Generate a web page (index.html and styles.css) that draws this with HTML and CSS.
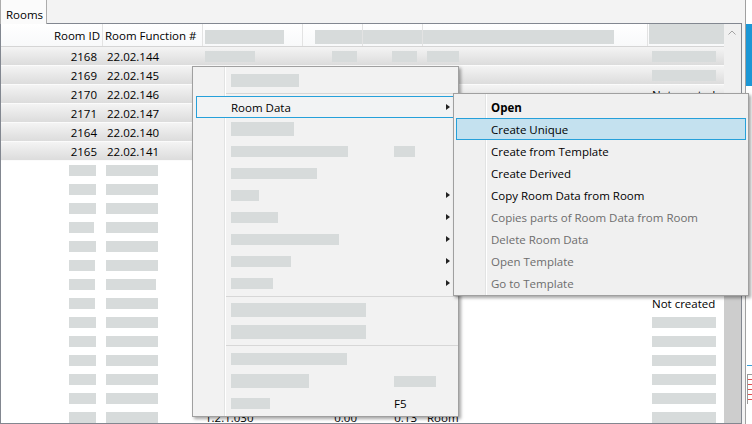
FILE: index.html
```html
<!DOCTYPE html>
<html>
<head>
<meta charset="utf-8">
<link rel="stylesheet" href="styles.css">
</head>
<body>
<div class="app">
  <div class="main">
    <div class="tabs"><div class="tab">Rooms</div></div>
    <div class="grid">
      <div class="cols">
        <div class="hdr">
          <div class="hc hc1">Room ID</div>
          <div class="hc hc2">Room Function #</div>
          <div class="hc hc3"><span class="hph w79"></span></div>
          <div class="hc hc4"><span class="hph w47"></span></div>
          <div class="hc hc5"><span class="hph w59"></span></div>
          <div class="hc hc6"><span class="hph w191"></span></div>
          <div class="hc hc7"><span class="hph7"></span></div>
        </div>

        <div class="row sel">
          <div class="c r1">2168</div><div class="c l2">22.02.144</div>
          <div class="c l3"><span class="ph w50"></span></div><div class="c r4"><span class="ph w25"></span></div>
          <div class="c r4"><span class="ph w25"></span></div><div class="c l6"><span class="ph w32"></span></div>
          <div class="c l7"><span class="ph w64"></span></div>
        </div>
        <div class="row sel">
          <div class="c r1">2169</div><div class="c l2">22.02.145</div>
          <div class="c l3"><span class="ph w50"></span></div><div class="c r4"><span class="ph w25"></span></div>
          <div class="c r4"><span class="ph w25"></span></div><div class="c l6"><span class="ph w32"></span></div>
          <div class="c l7"><span class="ph w64"></span></div>
        </div>
        <div class="row sel">
          <div class="c r1">2170</div><div class="c l2">22.02.146</div>
          <div class="c l3"><span class="ph w50"></span></div><div class="c r4"><span class="ph w25"></span></div>
          <div class="c r4"><span class="ph w25"></span></div><div class="c l6"><span class="ph w32"></span></div>
          <div class="c l7">Not created</div>
        </div>
        <div class="row sel">
          <div class="c r1">2171</div><div class="c l2">22.02.147</div>
          <div class="c l3"><span class="ph w50"></span></div><div class="c r4"><span class="ph w25"></span></div>
          <div class="c r4"><span class="ph w25"></span></div><div class="c l6"><span class="ph w32"></span></div>
          <div class="c l7"><span class="ph w64"></span></div>
        </div>
        <div class="row sel">
          <div class="c r1">2164</div><div class="c l2">22.02.140</div>
          <div class="c l3"><span class="ph w50"></span></div><div class="c r4"><span class="ph w25"></span></div>
          <div class="c r4"><span class="ph w25"></span></div><div class="c l6"><span class="ph w32"></span></div>
          <div class="c l7"><span class="ph w64"></span></div>
        </div>
        <div class="row sel">
          <div class="c r1">2165</div><div class="c l2">22.02.141</div>
          <div class="c l3"><span class="ph w50"></span></div><div class="c r4"><span class="ph w25"></span></div>
          <div class="c r4"><span class="ph w25"></span></div><div class="c l6"><span class="ph w32"></span></div>
          <div class="c l7"><span class="ph w64"></span></div>
        </div>

        <div class="row"><div class="c p1"><span class="ph w27"></span></div><div class="c p2"><span class="ph w52"></span></div><div class="c"></div><div class="c"></div><div class="c"></div><div class="c"></div><div class="c l7"><span class="ph w64"></span></div></div>
        <div class="row"><div class="c p1"><span class="ph w27"></span></div><div class="c p2"><span class="ph w52"></span></div><div class="c"></div><div class="c"></div><div class="c"></div><div class="c"></div><div class="c l7"><span class="ph w64"></span></div></div>
        <div class="row"><div class="c p1"><span class="ph w27"></span></div><div class="c p2"><span class="ph w52"></span></div><div class="c"></div><div class="c"></div><div class="c"></div><div class="c"></div><div class="c l7"><span class="ph w64"></span></div></div>
        <div class="row"><div class="c p1"><span class="ph w25"></span></div><div class="c p2"><span class="ph w52"></span></div><div class="c"></div><div class="c"></div><div class="c"></div><div class="c"></div><div class="c l7"><span class="ph w64"></span></div></div>
        <div class="row"><div class="c p1"><span class="ph w27"></span></div><div class="c p2"><span class="ph w52"></span></div><div class="c"></div><div class="c"></div><div class="c"></div><div class="c"></div><div class="c l7"><span class="ph w64"></span></div></div>
        <div class="row"><div class="c p1"><span class="ph w26"></span></div><div class="c p2"><span class="ph w52"></span></div><div class="c"></div><div class="c"></div><div class="c"></div><div class="c"></div><div class="c l7"><span class="ph w64"></span></div></div>
        <div class="row"><div class="c p1"><span class="ph w26"></span></div><div class="c p2"><span class="ph w50"></span></div><div class="c"></div><div class="c"></div><div class="c"></div><div class="c"></div><div class="c l7"><span class="ph w64"></span></div></div>
        <div class="row"><div class="c p1"><span class="ph w26"></span></div><div class="c p2"><span class="ph w52"></span></div><div class="c"></div><div class="c"></div><div class="c"></div><div class="c"></div><div class="c l7">Not created</div></div>
        <div class="row"><div class="c p1"><span class="ph w27"></span></div><div class="c p2"><span class="ph w52"></span></div><div class="c"></div><div class="c"></div><div class="c"></div><div class="c"></div><div class="c l7"><span class="ph w64"></span></div></div>
        <div class="row"><div class="c p1"><span class="ph w27"></span></div><div class="c p2"><span class="ph w52"></span></div><div class="c"></div><div class="c"></div><div class="c"></div><div class="c"></div><div class="c l7"><span class="ph w64"></span></div></div>
        <div class="row"><div class="c p1"><span class="ph w27"></span></div><div class="c p2"><span class="ph w52"></span></div><div class="c"></div><div class="c"></div><div class="c"></div><div class="c"></div><div class="c l7"><span class="ph w64"></span></div></div>
        <div class="row"><div class="c p1"><span class="ph w27"></span></div><div class="c p2"><span class="ph w52"></span></div><div class="c"></div><div class="c"></div><div class="c"></div><div class="c"></div><div class="c l7"><span class="ph w64"></span></div></div>
        <div class="row"><div class="c p1"><span class="ph w27"></span></div><div class="c p2"><span class="ph w52"></span></div><div class="c"></div><div class="c"></div><div class="c"></div><div class="c"></div><div class="c l7"><span class="ph w64"></span></div></div>
        <div class="row"><div class="c p1"><span class="ph w27"></span></div><div class="c p2"><span class="ph w52"></span></div><div class="c l3">1.2.1.030</div><div class="c r4">0.00</div><div class="c r4">0.13</div><div class="c l6">Room</div><div class="c l7"><span class="ph w64"></span></div></div>
      </div>
      <div class="vscroll">
        <div class="up"><svg width="17" height="17" viewBox="0 0 17 17"><polyline points="4.5,10.5 8,7 11.5,10.5" fill="none" stroke="#a3a3a3" stroke-width="1"/></svg></div>
        <div class="track"><div class="thumb"></div></div>
      </div>
    </div>
  </div>
  <div class="side">
    <div class="blue"></div>
    <div class="bline"></div>
    <div class="sico"></div>
  </div>
</div>

<div class="menu">
  <div class="mi"><span class="lbl"><span class="mph w68 h13"></span></span></div>
  <div class="sep"><span></span></div>
  <div class="mi open"><span class="lbl">Room Data</span><span class="arr"></span></div>
  <div class="mi"><span class="lbl"><span class="mph w63 h14"></span></span></div>
  <div class="mi"><span class="lbl"><span class="mph w117"></span></span><span class="mph w21"></span></div>
  <div class="mi"><span class="lbl"><span class="mph w86"></span></span></div>
  <div class="mi"><span class="lbl"><span class="mph w28"></span></span><span class="arr"></span></div>
  <div class="mi"><span class="lbl"><span class="mph w47"></span></span><span class="arr"></span></div>
  <div class="mi"><span class="lbl"><span class="mph w108"></span></span><span class="arr"></span></div>
  <div class="mi"><span class="lbl"><span class="mph w60"></span></span><span class="arr"></span></div>
  <div class="mi"><span class="lbl"><span class="mph w42"></span></span><span class="arr"></span></div>
  <div class="sep"><span></span></div>
  <div class="mi"><span class="lbl"><span class="mph w135 h14"></span></span></div>
  <div class="mi"><span class="lbl"><span class="mph w135 h14"></span></span></div>
  <div class="sep"><span></span></div>
  <div class="mi"><span class="lbl"><span class="mph w116 h12"></span></span></div>
  <div class="mi"><span class="lbl"><span class="mph w78 h14"></span></span><span class="mph w42"></span></div>
  <div class="mi"><span class="lbl"><span class="mph w39"></span></span><span class="key">F5</span></div>
</div>

<div class="submenu">
  <div class="mi b">Open</div>
  <div class="mi hl">Create Unique</div>
  <div class="mi">Create from Template</div>
  <div class="mi">Create Derived</div>
  <div class="mi">Copy Room Data from Room</div>
  <div class="mi dis">Copies parts of Room Data from Room</div>
  <div class="mi dis">Delete Room Data</div>
  <div class="mi dis">Open Template</div>
  <div class="mi dis">Go to Template</div>
</div>
</body>
</html>
```

FILE: styles.css
```css
* { box-sizing: border-box; }

body {
  margin: 0;
  width: 752px;
  height: 424px;
  overflow: hidden;
  background: #f3f3f3;
  font-family: "Open Sans", "Noto Sans", sans-serif;
  font-size: 11.5px;
  color: #000;
  position: relative;
}

.app { display: flex; height: 424px; }
.main { width: 742px; display: flex; flex-direction: column; }

.tabs { display: flex; height: 23px; flex: none; position: relative; z-index: 1; }
.tab {
  width: 47px;
  height: 24px;
  border-left: 1px solid #acacac;
  border-right: 1px solid #acacac;
  background: #fbfbfb;
  padding: 6px 0 0 5px;
  line-height: 17px;
  font-size: 11.5px;
}

.grid {
  flex: 1;
  display: flex;
  border: 1px solid #828790;
  background: #fff;
  min-height: 0;
  overflow: hidden;
}

.cols { width: 723px; display: flex; flex-direction: column; }

.hdr, .row {
  display: grid;
  grid-template-columns: 102px 100px 100px 60px 60px 225px 76px;
  flex: none;
}

.hdr {
  height: 23px;
  border-bottom: 1px solid #d5d5d5;
  background: linear-gradient(#ffffff, #f8f9fa);
}
.hc { border-right: 1px solid #e3e3e3; display: flex; align-items: center; white-space: nowrap; padding-top: 1px; }
.hc1 { justify-content: flex-end; padding-right: 2px; }
.hc2 { padding-left: 2px; }
.hc3 { padding-left: 2px; align-items: flex-end; padding-bottom: 2px; }
.hc4 { padding-left: 12px; align-items: flex-end; padding-bottom: 2px; }
.hc5 { align-items: flex-end; padding-bottom: 2px; }
.hc6 { align-items: flex-end; padding-bottom: 2px; }
.hc7 { border-right: none; align-items: flex-start; padding-left: 1px; padding-top: 0; }
.hph { display: block; height: 14px; background: #d7dbdb; }
.hph7 { display: block; height: 20px; width: 75px; background: #d7dbdb; }

.row { height: 19px; }
.row.sel {
  background: linear-gradient(#f4f4f4, #dcdcdc);
  border-bottom: 1px solid #fbfbfb;
}
.c { display: flex; align-items: center; white-space: nowrap; overflow: hidden; min-width: 0; }
.row.sel .c { padding-top: 1px; }
.r1 { justify-content: flex-end; padding-right: 6px; }
.l2 { padding-left: 4px; }
.l3 { padding-left: 2px; }
.r4 { justify-content: flex-end; padding-right: 6px; }
.l6 { padding-left: 4px; }
.l7 { padding-left: 4px; }
.p1 { padding-left: 68px; }
.p2 { padding-left: 3px; }

.ph { display: block; height: 11px; background: #d7dbdb; flex: none; }

.w21 { width: 21px; } .w25 { width: 25px; } .w26 { width: 26px; } .w27 { width: 27px; }
.w28 { width: 28px; } .w32 { width: 32px; } .w39 { width: 39px; } .w42 { width: 42px; }
.w47 { width: 47px; } .w50 { width: 50px; } .w52 { width: 52px; } .w59 { width: 59px; }
.w60 { width: 60px; } .w63 { width: 63px; } .w64 { width: 64px; } .w68 { width: 68px; }
.w78 { width: 78px; } .w79 { width: 79px; } .w86 { width: 86px; } .w108 { width: 108px; }
.w116 { width: 116px; } .w117 { width: 117px; } .w135 { width: 135px; } .w191 { width: 191px; }

.vscroll { width: 17px; background: #f0f0f0; display: flex; flex-direction: column; }
.up { height: 17px; flex: none; }
.up svg { display: block; }
.track { flex: 1; padding-top: 90px; }
.thumb { height: 100%; background: #cdcdcd; }

.side {
  margin-left: 3px;
  flex: 1;
  border-left: 1px solid #a0a0a0;
  background: #fff;
  display: flex;
  flex-direction: column;
}
.blue { margin-top: 24px; height: 62px; background: #1c97d5; flex: none; }
.bline { margin-top: 279px; margin-left: 1px; height: 1px; background: #3a9fd8; flex: none; }
.sico {
  margin-top: 8px;
  margin-left: 1px;
  height: 30px;
  border-top: 1px solid #9a9a9a;
  border-left: 1px solid #9a9a9a;
  background: repeating-linear-gradient(#ffffff 0 4px, #e05050 4px 5px);
  flex: none;
}

/* context menus */
.menu, .submenu {
  position: absolute;
  border: 1px solid #a0a0a0;
  padding: 2px 0;
  background-color: #f2f2f2;
  background-image: linear-gradient(to right, transparent 31px, #e2e3e3 31px, #e2e3e3 32px, #ffffff 32px, #ffffff 33px, transparent 33px);
  box-shadow: 2px 2px 3px rgba(0, 0, 0, 0.35);
  font-size: 11.5px;
}
.menu { left: 192px; top: 66px; width: 267px; height: 351px; z-index: 5; }
.submenu { left: 453px; top: 93px; width: 296px; height: 203px; z-index: 6; background-color: #f0f0f0; }

.mi {
  height: 22px;
  margin: 0 3px;
  border: 1px solid transparent;
  display: flex;
  align-items: center;
  padding-left: 34px;
  white-space: nowrap;
}
.submenu .mi { margin: 0 2px; }
.mi .lbl { width: 163px; display: flex; align-items: center; flex: none; }
.mi.open { border-color: #26a0da; background: #f2f3f4; }
.mi.hl { border-color: #26a0da; background: #c4e1ef; }
.mi.dis { color: #6d6d6d; }
.mi.b { font-weight: 700; }

.mph { display: block; height: 11px; background: #d7dbdb; flex: none; }
.mph.h12 { height: 12px; }
.mph.h13 { height: 13px; }
.mph.h14 { height: 14px; }
.key { color: #000; }

.arr {
  width: 0;
  height: 0;
  border-left: 4px solid #222;
  border-top: 3.5px solid transparent;
  border-bottom: 3.5px solid transparent;
  margin-left: auto;
  margin-right: 4px;
}

.sep { height: 5px; padding-top: 2px; margin-left: 33px; }
.sep span { display: block; height: 1px; background: #d7d7d7; }
```
